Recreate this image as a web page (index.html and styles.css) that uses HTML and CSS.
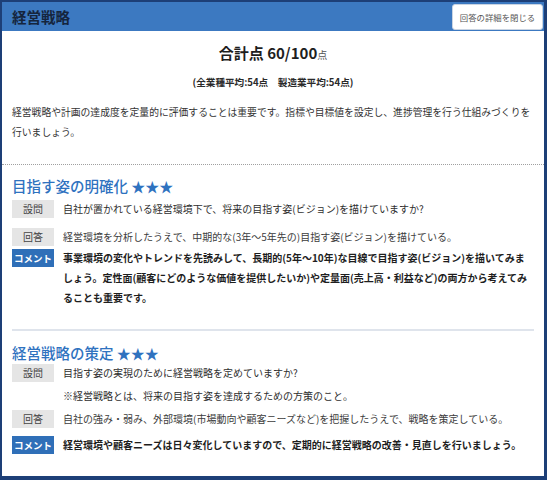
FILE: index.html
```html
<!DOCTYPE html>
<html lang="ja">
<head>
<meta charset="utf-8">
<link rel="stylesheet" href="styles.css">
</head>
<body>
<div class="frame">
  <header class="bar">
    <h1 class="bar-title">経営戦略</h1>
    <button class="close-btn">回答の詳細を閉じる</button>
  </header>
  <section class="summary">
    <div class="score">合計点 60/100<span class="pt">点</span></div>
    <div class="avg">(全業種平均:54点　製造業平均:54点)</div>
    <p class="lead">経営戦略や計画の達成度を定量的に評価することは重要です。指標や目標値を設定し、進捗管理を行う仕組みづくりを行いましょう。</p>
  </section>
  <section class="item item-first">
    <h2 class="item-title">目指す姿の明確化 <span class="stars">★★★</span></h2>
    <div class="row row-q">
      <span class="tag">設問</span>
      <div class="txt">自社が置かれている経営環境下で、将来の目指す姿(ビジョン)を描けていますか?</div>
    </div>
    <div class="row row-a">
      <span class="tag">回答</span>
      <div class="txt ans">経営環境を分析したうえで、中期的な(3年〜5年先の)目指す姿(ビジョン)を描けている。</div>
    </div>
    <div class="row row-c1">
      <span class="tag tag-c">コメント</span>
      <div class="txt com">事業環境の変化やトレンドを先読みして、長期的(5年〜10年)な目線で目指す姿(ビジョン)を描いてみましょう。定性面(顧客にどのような価値を提供したいか)や定量面(売上高・利益など)の両方から考えてみることも重要です。</div>
    </div>
  </section>
  <section class="item item-second">
    <h2 class="item-title">経営戦略の策定 <span class="stars">★★★</span></h2>
    <div class="row row-q2">
      <span class="tag">設問</span>
      <div class="txt">目指す姿の実現のために経営戦略を定めていますか?<div class="note">※経営戦略とは、将来の目指す姿を達成するための方策のこと。</div></div>
    </div>
    <div class="row row-a2">
      <span class="tag">回答</span>
      <div class="txt ans">自社の強み・弱み、外部環境(市場動向や顧客ニーズなど)を把握したうえで、戦略を策定している。</div>
    </div>
    <div class="row row-c2">
      <span class="tag tag-c">コメント</span>
      <div class="txt com">経営環境や顧客ニーズは日々変化していますので、定期的に経営戦略の改善・見直しを行いましょう。</div>
    </div>
  </section>
</div>
</body>
</html>
```

FILE: styles.css
```css
* { box-sizing: border-box; }
html, body { margin: 0; padding: 0; background: #ffffff; }
body {
  font-family: "Noto Sans CJK JP", "Noto Sans", sans-serif;
  color: #2a2a2a;
}
.frame {
  width: 547px;
  height: 480px;
  border: 2px solid #1d3f77;
  border-bottom-width: 4px;
  border-right-width: 3px;
  overflow: hidden;
  background: #fff;
}
.bar {
  height: 29px;
  background: #3c79c1;
  display: flex;
  align-items: center;
  justify-content: space-between;
  padding: 0 1px 0 10px;
}
.bar-title {
  margin: 0;
  font-size: 14.5px;
  font-weight: 700;
  color: #15253d;
  line-height: 20px;
}
.close-btn {
  height: 26px;
  width: 91px;
  padding: 0;
  background: #fff;
  border: 1px solid #c9d4e2;
  border-radius: 3px;
  font-family: inherit;
  font-size: 8.4px;
  color: #555;
}
.summary {
  padding: 12px 10px 22px;
  border-bottom: 1px dotted #a0a0a0;
}
.score {
  text-align: center;
  font-size: 15px;
  font-weight: 700;
  line-height: 20px;
  color: #1e1e1e;
}
.pt {
  font-size: 10px;
  font-weight: 400;
  color: #555;
}
.avg {
  margin-top: 9px;
  text-align: center;
  font-size: 9.6px;
  font-weight: 700;
  line-height: 16px;
  color: #2a2a2a;
}
.lead {
  margin: 12px 0 0;
  font-size: 9.8px;
  line-height: 20px;
  color: #333;
}
.item {
  margin: 0 10px;
}
.item-first {
  padding: 11px 0 21px;
  border-bottom: 2px solid #dfe4ec;
}
.item-second {
  padding-top: 12px;
}
.item-title {
  margin: 0;
  font-size: 14.5px;
  font-weight: 500;
  line-height: 20px;
  color: #2f72bf;
}
.stars {
  font-size: 14px;
}
.row {
  display: flex;
  align-items: flex-start;
  gap: 9px;
  font-size: 10px;
  line-height: 20px;
}
.row-q { margin-top: 3px; }
.row-a { margin-top: 8px; }
.row-c1 { margin-top: 1px; }
.row-q2 { margin-top: 0; }
.row-a2 { margin-top: 3px; }
.row-c2 { margin-top: 6px; }
.tag {
  flex: 0 0 42px;
  height: 18px;
  margin-top: 1px;
  background: #e5e5e5;
  color: #444;
  font-size: 10px;
  line-height: 18px;
  text-align: center;
}
.tag-c {
  background: #2f6fb8;
  color: #fff;
  font-weight: 700;
  font-size: 9.5px;
}
.txt {
  flex: 1;
  color: #2e2e2e;
}
.ans { color: #3c3c3c; }
.com {
  font-weight: 700;
  color: #1e1e1e;
}
.note { margin-top: 3px; }
```
